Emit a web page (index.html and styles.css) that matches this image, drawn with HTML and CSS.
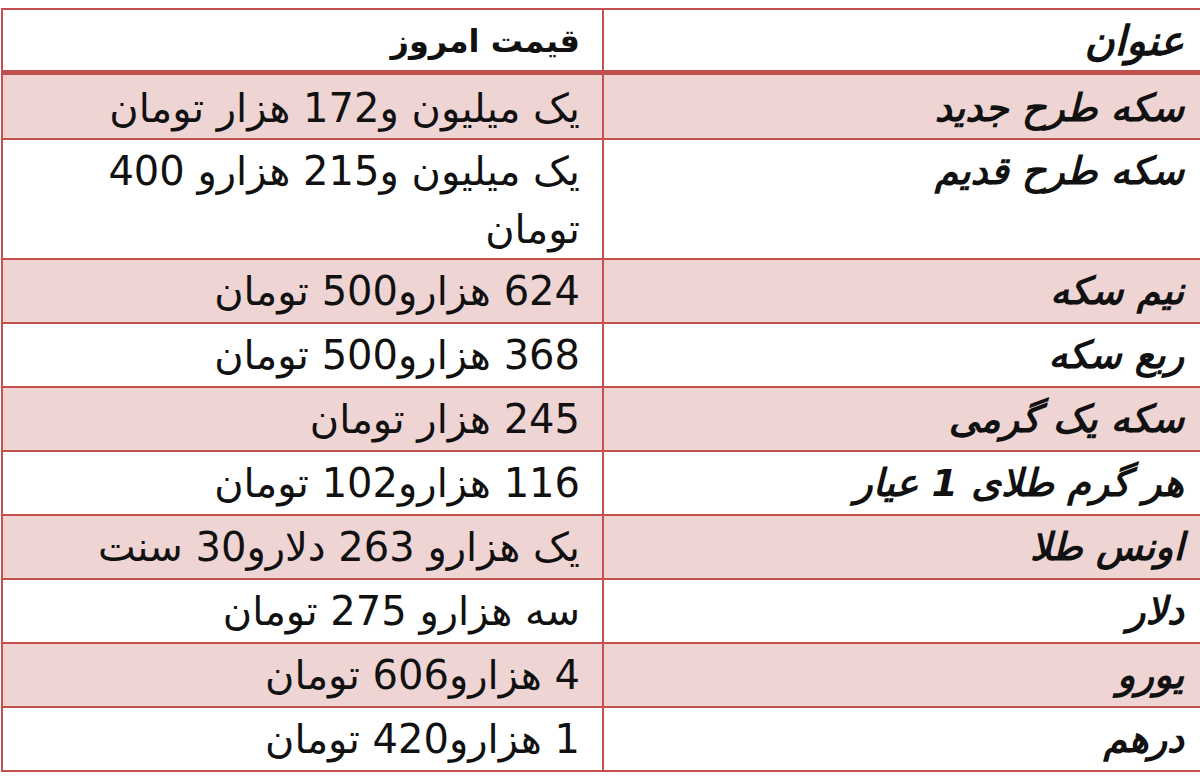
FILE: index.html
```html
<!DOCTYPE html>
<html lang="fa" dir="rtl">
<head>
<meta charset="utf-8">
<title>قیمت امروز</title>
<link rel="stylesheet" href="styles.css">
</head>
<body>
<table class="prices">
  <thead>
    <tr class="head">
      <th class="title">عنوان</th>
      <th class="price">قیمت امروز</th>
    </tr>
  </thead>
  <tbody>
    <tr class="band first"><td class="title">سکه طرح جدید</td><td class="price">یک میلیون و172 هزار تومان</td></tr>
    <tr class="tall"><td class="title">سکه طرح قدیم</td><td class="price">یک میلیون و215 هزارو 400<br>تومان</td></tr>
    <tr class="band"><td class="title">نیم سکه</td><td class="price">624 هزارو500 تومان</td></tr>
    <tr><td class="title">ربع سکه</td><td class="price">368 هزارو500 تومان</td></tr>
    <tr class="band"><td class="title">سکه یک گرمی</td><td class="price">245 هزار تومان</td></tr>
    <tr><td class="title">هر گرم طلای 1 عیار</td><td class="price">116 هزارو102 تومان</td></tr>
    <tr class="band"><td class="title">اونس طلا</td><td class="price">یک هزارو 263 دلارو30 سنت</td></tr>
    <tr><td class="title">دلار</td><td class="price">سه هزارو 275 تومان</td></tr>
    <tr class="band"><td class="title">یورو</td><td class="price">4 هزارو606 تومان</td></tr>
    <tr><td class="title">درهم</td><td class="price">1 هزارو420 تومان</td></tr>
  </tbody>
</table>
</body>
</html>
```

FILE: styles.css
```css
html, body {
  margin: 0;
  padding: 0;
  background: #ffffff;
  overflow: hidden;
}
body {
  width: 1200px;
  height: 779px;
  padding-top: 8px;
  box-sizing: border-box;
  direction: ltr;
}
.prices {
  direction: rtl;
  border-collapse: collapse;
  width: 1204px;
  margin-left: 1px;
  table-layout: fixed;
  font-family: "DejaVu Sans", "Noto Sans", sans-serif;
  color: #111111;
  font-size: 40px;
  line-height: 58px;
}
.prices th, .prices td {
  border: 2px solid #c6504f;
  padding: 2px 22px 0 4px;
  text-align: right;
  vertical-align: top;
  height: 64px;
  box-sizing: border-box;
  white-space: nowrap;
}
.prices th {
  height: 61px;
  font-weight: bold;
  border-bottom: 5px solid #c0504d;
}
.prices .title {
  width: 600px;
  font-weight: bold;
  font-style: italic;
  font-size: 38px;
  padding-right: 19px;
}
.prices th.title {
  font-size: 41px;
}
.prices .price {
  width: 600px;
  font-weight: normal;
}
.prices th.price {
  font-weight: bold;
  font-size: 32px;
}
.band td {
  background: #efd4d4;
}
.first td {
  height: 66px;
  padding-top: 4px;
}
.tall td {
  height: 120px;
}
```
